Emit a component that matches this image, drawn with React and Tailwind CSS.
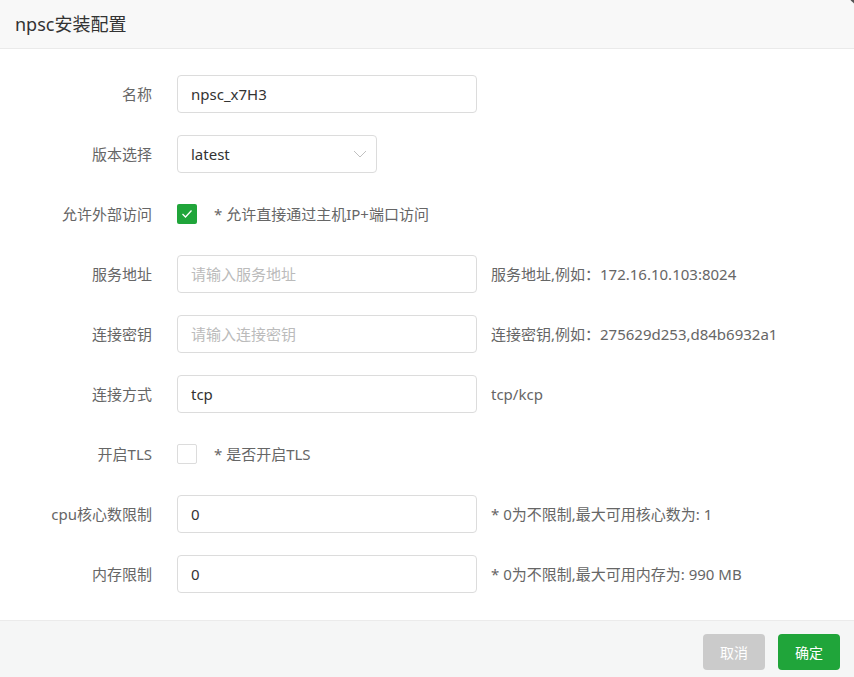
import React from "react";

const font = { fontFamily: '"Noto Sans", "Noto Sans CJK SC", sans-serif' };

function Label({ children }) {
  return (
    <div className="w-[152px] shrink-0 text-right text-[15px] text-[#666] pr-0">{children}</div>
  );
}

function Row({ label, children }) {
  return (
    <div className="flex items-center h-[38px] mb-[22px]">
      <Label>{label}</Label>
      <div className="ml-[25px] flex items-center">{children}</div>
    </div>
  );
}

function Input({ value, placeholder, width = "w-[300px]" }) {
  return (
    <div
      className={`${width} h-[38px] border border-[#dcdcdc] rounded-[4px] bg-white flex items-center px-[13px] text-[15px] ${value ? "text-[#333]" : "text-[#bbb]"}`}
    >
      {value || placeholder}
    </div>
  );
}

function Hint({ children }) {
  return <div className="ml-[14px] text-[15px] text-[#666]">{children}</div>;
}

export default function App() {
  return (
    <div className="relative w-[854px] h-[677px] bg-white overflow-hidden flex flex-col" style={font}>
      <div className="absolute -right-[34px] -top-[34px] w-[42px] h-[42px] rounded-full border-[3px] border-[#555] bg-[#f8f8f8]"></div>
      <div className="h-[49px] shrink-0 bg-[#f8f8f8] border-b border-[#eaeaea] flex items-center pl-[15px] text-[18px] text-[#333]">
        npsc安装配置
      </div>
      <div className="flex-1 pt-[26px]">
        <Row label="名称">
          <Input value="npsc_x7H3" />
        </Row>
        <Row label="版本选择">
          <div className="w-[200px] h-[38px] border border-[#dcdcdc] rounded-[4px] bg-white flex items-center justify-between pl-[13px] pr-[9px] text-[15px] text-[#333]">
            <span>latest</span>
            <svg width="14" height="8" viewBox="0 0 14 8" fill="none">
              <path d="M1 1l6 6 6-6" stroke="#c0c0c0" strokeWidth="1" />
            </svg>
          </div>
        </Row>
        <Row label="允许外部访问">
          <div className="w-[20px] h-[20px] rounded-[2px] bg-[#20a53a] flex items-center justify-center">
            <svg width="12" height="10" viewBox="0 0 12 10" fill="none">
              <path d="M1.5 5l3 3 6-6.5" stroke="#fff" strokeWidth="1.3" />
            </svg>
          </div>
          <div className="ml-[17px] text-[15px] text-[#666]">* 允许直接通过主机IP+端口访问</div>
        </Row>
        <Row label="服务地址">
          <Input placeholder="请输入服务地址" />
          <Hint>服务地址,例如：172.16.10.103:8024</Hint>
        </Row>
        <Row label="连接密钥">
          <Input placeholder="请输入连接密钥" />
          <Hint>连接密钥,例如：275629d253,d84b6932a1</Hint>
        </Row>
        <Row label="连接方式">
          <Input value="tcp" />
          <Hint>tcp/kcp</Hint>
        </Row>
        <Row label="开启TLS">
          <div className="w-[20px] h-[20px] rounded-[2px] border border-[#dcdcdc] bg-white"></div>
          <div className="ml-[17px] text-[15px] text-[#666]">* 是否开启TLS</div>
        </Row>
        <Row label="cpu核心数限制">
          <Input value="0" />
          <Hint>* 0为不限制,最大可用核心数为: 1</Hint>
        </Row>
        <Row label="内存限制">
          <Input value="0" />
          <Hint>* 0为不限制,最大可用内存为: 990 MB</Hint>
        </Row>
      </div>
      <div className="h-[57px] shrink-0 bg-[#f5f6f6] border-t border-[#ebebeb] flex justify-end items-start pt-[13px] pr-[14px] gap-[13px]">
        <div className="w-[62px] h-[36px] rounded-[4px] bg-[#cbcbcb] text-white text-[14px] flex items-center justify-center">取消</div>
        <div className="w-[62px] h-[36px] rounded-[4px] bg-[#20a53a] text-white text-[14px] flex items-center justify-center">确定</div>
      </div>
    </div>
  );
}
